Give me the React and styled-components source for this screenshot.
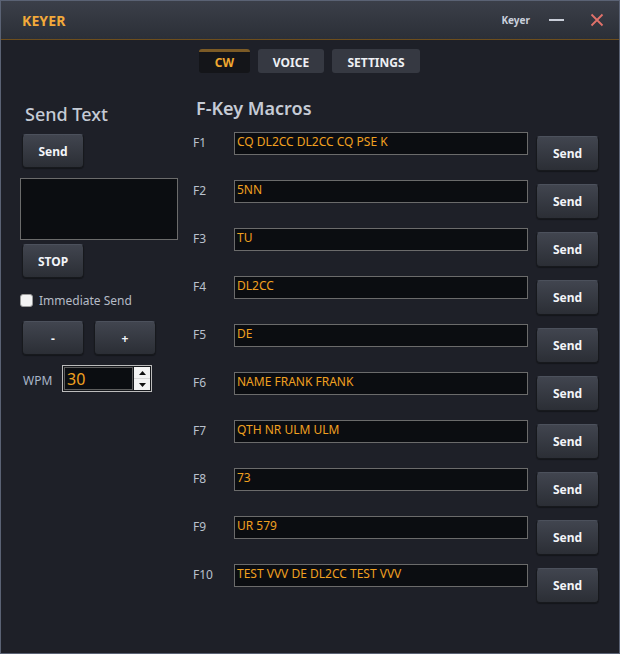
import React from "react";
import styled, { createGlobalStyle } from "styled-components";

const Global = createGlobalStyle`
  html, body { margin: 0; padding: 0; background: #1e2028; }
  body { font-family: "Noto Sans", "Open Sans", sans-serif; }
  * { box-sizing: border-box; }
`;

const Frame = styled.div`
  width: 620px;
  height: 654px;
  display: flex;
  flex-direction: column;
  background: #1e2028;
  border: 1px solid #5a6274;
  overflow: hidden;
`;

const TitleBar = styled.div`
  height: 39px;
  flex: none;
  display: flex;
  align-items: center;
  padding: 0 14px 0 21px;
  background: linear-gradient(#3b3f49, #2b2f37);
  border-bottom: 1px solid #6e4e1c;
`;

const AppName = styled.div`
  font-size: 14px;
  font-weight: 700;
  color: #f3aa3a;
  letter-spacing: 0.1px;
  flex: 1;
`;

const WinLabel = styled.div`
  font-size: 10px;
  font-weight: 700;
  color: #c9d0dc;
  margin-right: 19px;
`;

const WinButton = styled.div`
  width: 16px;
  height: 16px;
  display: flex;
  align-items: center;
  justify-content: center;
  margin-left: ${(p) => p.$gap || 0}px;
`;

const Body = styled.div`
  flex: 1;
  display: flex;
  flex-direction: column;
  padding-top: 9px;
`;

const TabRow = styled.div`
  display: flex;
  justify-content: center;
  gap: 8px;
  padding-right: 1px;
`;

const Tab = styled.div`
  height: 24px;
  display: flex;
  align-items: center;
  justify-content: center;
  font-size: 12px;
  font-weight: 700;
  border-radius: 3px;
  color: ${(p) => (p.$active ? "#f0a830" : "#eef0f4")};
  background: ${(p) => (p.$active ? "#141519" : "#363942")};
  border-top: 3px solid ${(p) => (p.$active ? "#7c5b26" : "#363942")};
  width: ${(p) => p.$w}px;
`;

const Columns = styled.div`
  display: flex;
`;

const LeftPanel = styled.div`
  width: 194px;
  padding-left: 19px;
  padding-top: 29px;
  display: flex;
  flex-direction: column;
  align-items: flex-start;
`;

const RightPanel = styled.div`
  flex: 1;
  padding-top: 23px;
`;

const Heading = styled.div`
  font-size: 18px;
  line-height: 24px;
  font-weight: ${(p) => (p.$bold ? 600 : 500)};
  color: #c5cbd5;
  margin-left: ${(p) => p.$indent || 0}px;
`;

const Button = styled.button`
  width: ${(p) => p.$w || 62}px;
  height: ${(p) => p.$h || 34}px;
  margin: 0;
  margin-top: ${(p) => p.$mt || 0}px;
  margin-left: ${(p) => p.$ml || 0}px;
  padding: 0;
  font-family: inherit;
  font-size: 12px;
  font-weight: 700;
  color: #f2f4f8;
  background: linear-gradient(#41454f, #2b2e35);
  border: 1px solid #17191d;
  border-top-color: #4c515c;
  border-radius: 4px;
  box-shadow: 0 1px 1px rgba(0, 0, 0, 0.35);
`;

const SendArea = styled.div`
  width: 158px;
  height: 62px;
  margin-top: 10px;
  background: #0b0d11;
  border: 1px solid #6b6b6b;
`;

const CheckRow = styled.label`
  display: flex;
  align-items: center;
  gap: 6px;
  margin-top: 15px;
  font-size: 12px;
  color: #b5bbc6;
  height: 14px;
`;

const CheckBox = styled.span`
  width: 13px;
  height: 13px;
  border-radius: 3px;
  background: #f3f3f3;
  border: 1px solid #9a9a9a;
`;

const PairRow = styled.div`
  display: flex;
  gap: 10px;
  margin-top: 14px;
  margin-left: 2px;
`;

const WpmRow = styled.div`
  display: flex;
  align-items: center;
  margin-top: 10px;
  margin-left: 3px;
`;

const WpmLabel = styled.div`
  font-size: 12px;
  color: #a9b6c8;
  width: 39px;
  padding-top: 3px;
`;

const Spinner = styled.div`
  width: 90px;
  height: 27px;
  display: flex;
  padding: 1px;
  border: 1px solid #bcbcbc;
  background: #16181c;
`;

const SpinValue = styled.div`
  flex: 1;
  border: 1px solid #5e5e5e;
  background: #0b0d11;
  color: #f0a020;
  font-size: 16px;
  line-height: 22px;
  padding-left: 2px;
`;

const SpinButtons = styled.div`
  width: 16px;
  display: flex;
  flex-direction: column;
  gap: 1px;
  background: #d9d9d9;
  margin-left: 1px;
`;

const SpinButton = styled.div`
  flex: 1;
  background: #f4f4f4;
  display: flex;
  align-items: center;
  justify-content: center;
`;

const MacroGrid = styled.div`
  display: grid;
  grid-template-columns: 33px 294px 63px;
  grid-auto-rows: 48px;
  column-gap: 8px;
  margin-top: 12px;
  margin-left: -2px;
`;

const FKey = styled.div`
  font-size: 12px;
  color: #b9c1cd;
  padding-top: 2px;
`;

const MacroBox = styled.div`
  height: 23px;
  background: #0b0d11;
  border: 1px solid #6b6b6b;
  color: #f0a020;
  font-size: 12px;
  line-height: 16px;
  padding: 1px 0 0 2px;
  white-space: nowrap;
  overflow: hidden;
`;

const macros = [
  "CQ DL2CC DL2CC CQ PSE K",
  "5NN",
  "TU",
  "DL2CC",
  "DE",
  "NAME FRANK FRANK",
  "QTH NR ULM ULM",
  "73",
  "UR 579",
  "TEST VVV DE DL2CC TEST VVV",
];

const Arrow = ({ up }) => (
  <svg width="7" height="4" viewBox="0 0 7 4">
    <path d={up ? "M0 4 L3.5 0 L7 4 Z" : "M0 0 L7 0 L3.5 4 Z"} fill="#111" />
  </svg>
);

export default function App() {
  return (
    <>
      <Global />
      <Frame>
        <TitleBar>
          <AppName>KEYER</AppName>
          <WinLabel>Keyer</WinLabel>
          <WinButton>
            <svg width="16" height="4" viewBox="0 0 16 4">
              <rect x="0" y="1" width="15" height="2" fill="#c9ced8" />
            </svg>
          </WinButton>
          <WinButton $gap={24}>
            <svg width="14" height="14" viewBox="0 0 14 14">
              <path d="M1.5 1.5 L12.5 12.5 M12.5 1.5 L1.5 12.5" stroke="#e0716a" strokeWidth="1.8" />
            </svg>
          </WinButton>
        </TitleBar>
        <Body>
          <TabRow>
            <Tab $active $w={51}>CW</Tab>
            <Tab $w={66}>VOICE</Tab>
            <Tab $w={88}>SETTINGS</Tab>
          </TabRow>
          <Columns>
            <LeftPanel>
              <Heading $indent={5}>Send Text</Heading>
              <Button $mt={8} $ml={2}>Send</Button>
              <SendArea />
              <Button $mt={4} $ml={2}>STOP</Button>
              <CheckRow>
                <CheckBox />
                Immediate Send
              </CheckRow>
              <PairRow>
                <Button>-</Button>
                <Button>+</Button>
              </PairRow>
              <WpmRow>
                <WpmLabel>WPM</WpmLabel>
                <Spinner>
                  <SpinValue>30</SpinValue>
                  <SpinButtons>
                    <SpinButton><Arrow up /></SpinButton>
                    <SpinButton><Arrow /></SpinButton>
                  </SpinButtons>
                </Spinner>
              </WpmRow>
            </LeftPanel>
            <RightPanel>
              <Heading $bold $indent={1}>F-Key Macros</Heading>
              <MacroGrid>
                {macros.map((m, i) => (
                  <React.Fragment key={i}>
                    <FKey>F{i + 1}</FKey>
                    <MacroBox>{m}</MacroBox>
                    <Button $w={63} $h={35} $mt={4}>Send</Button>
                  </React.Fragment>
                ))}
              </MacroGrid>
            </RightPanel>
          </Columns>
        </Body>
      </Frame>
    </>
  );
}
